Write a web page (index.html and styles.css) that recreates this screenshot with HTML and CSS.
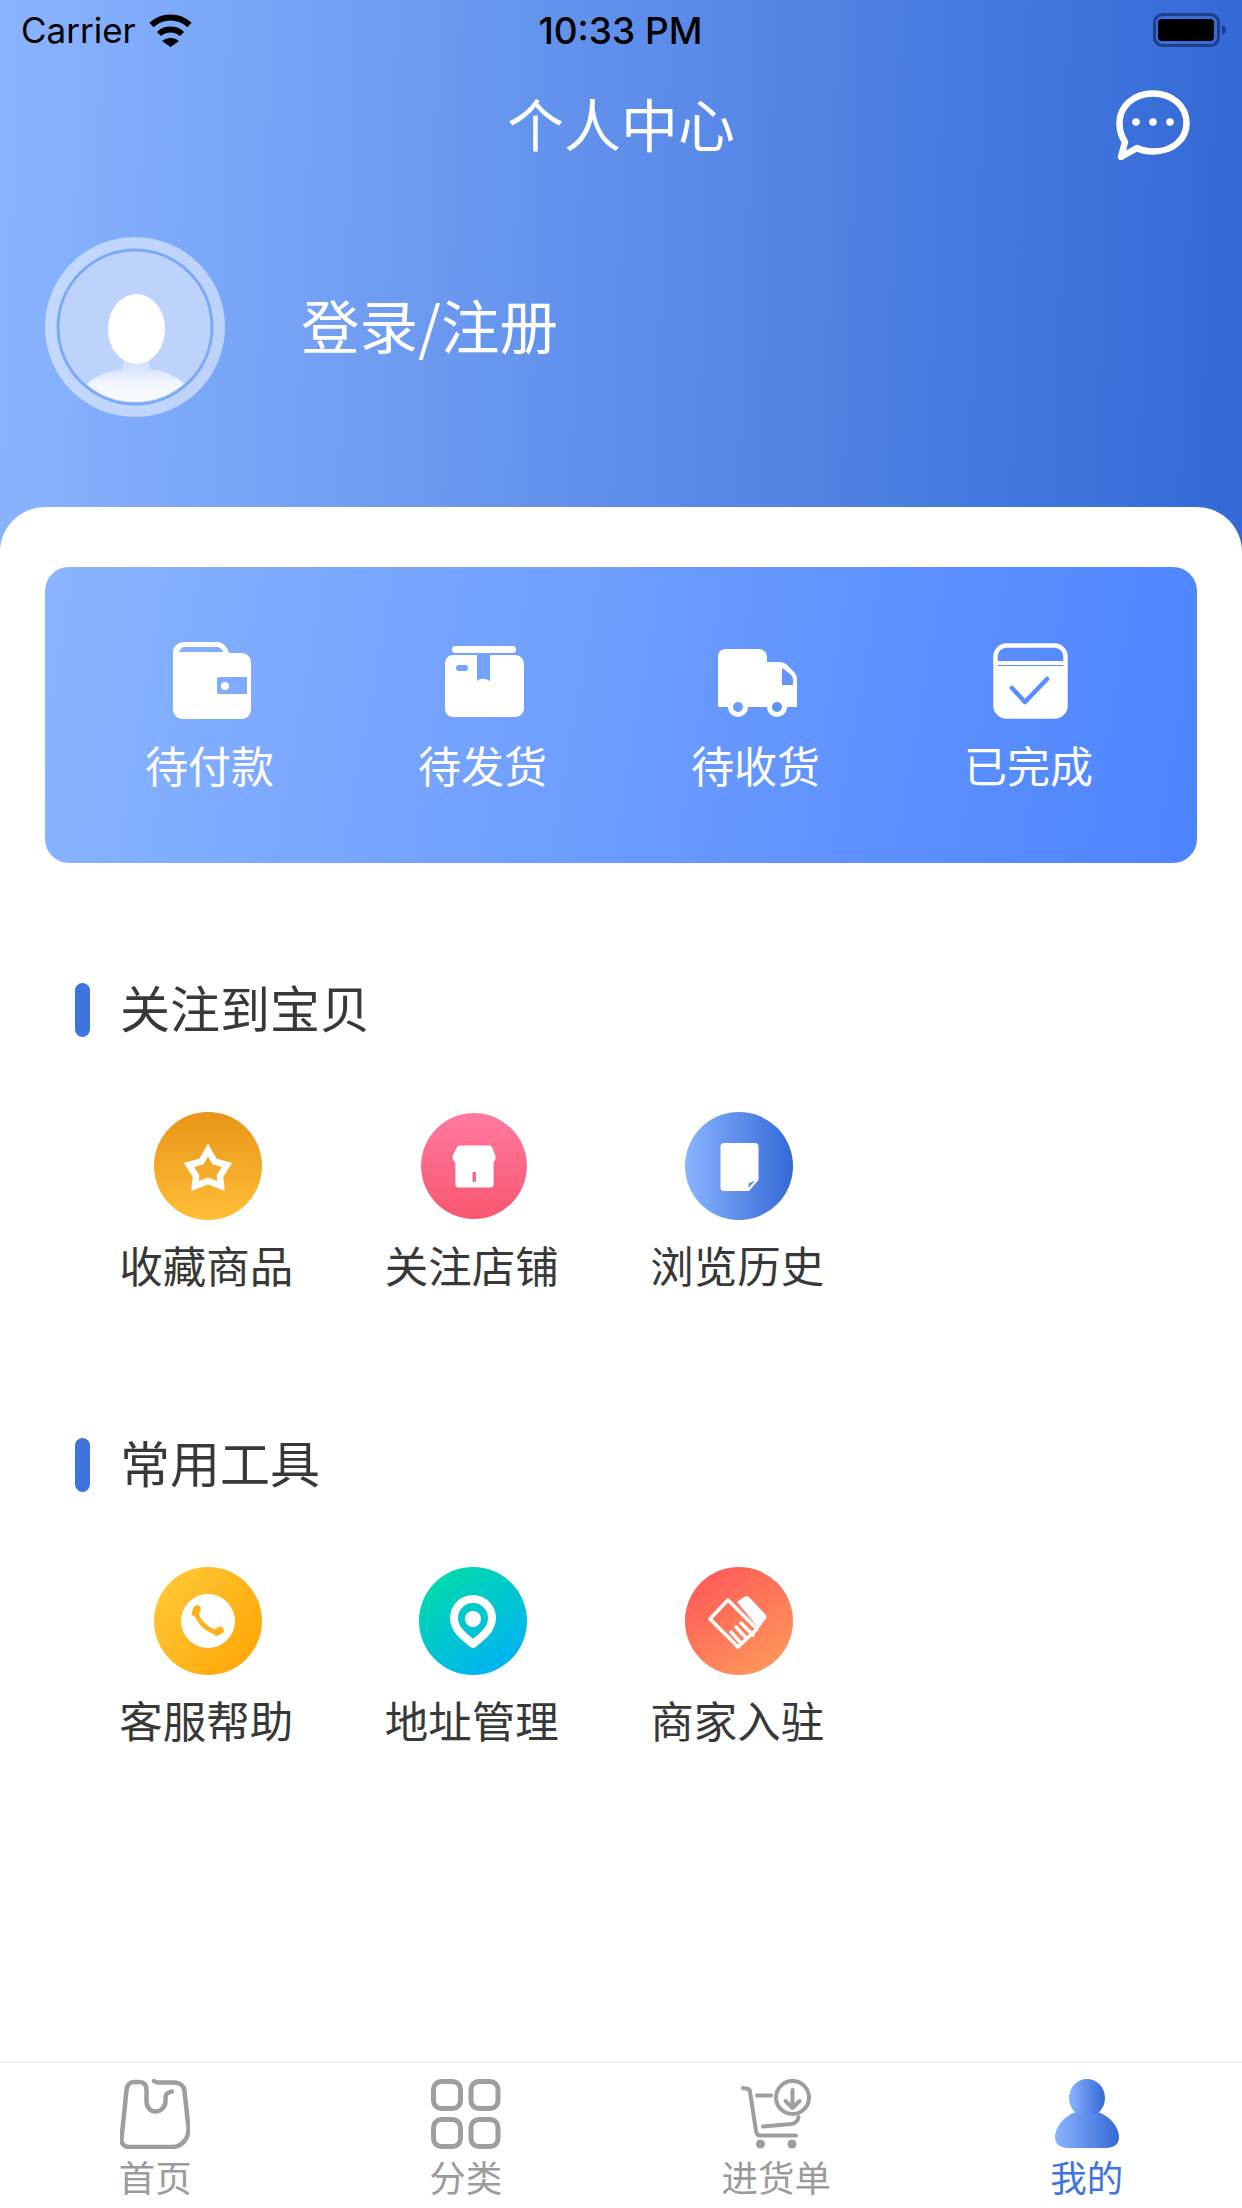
FILE: index.html
```html
<!DOCTYPE html>
<html lang="zh-CN">
<head>
  <meta charset="UTF-8">
  <title>个人中心</title>
  <link rel="stylesheet" href="styles.css">
</head>
<body>
  <div class="page">
    <header class="top">
      <div class="status-bar">
        <div class="status-left">
          <span class="carrier">Carrier</span>
          <svg class="wifi" viewBox="0 0 45 33"><path d="M3.5 11C14 1 31 1 41.5 11M11 20C17 14 28 14 34 20" fill="none" stroke="#000" stroke-width="6"/><path d="M14 27C19 23 26 23 31 27L22.5 33Z"/></svg>
        </div>
        <span class="time">10:33 PM</span>
        <svg class="battery" viewBox="0 0 73 34"><rect x="1.5" y="1.5" width="64" height="31" rx="8" fill="none" stroke="#1f3f8c" stroke-width="3"/><rect x="5" y="6" width="56" height="22" rx="4"/><path d="M69 12c3 1 4 3 4 5s-1 4-4 5Z" fill="#1f3f8c"/></svg>
      </div>
      <div class="nav-bar">
        <span></span>
        <h1>个人中心</h1>
        <svg class="chat" viewBox="0 0 74 70"><path d="M9 52C5 46 3.500 39 3.500 33C3.500 16 18 3.500 37 3.500S70.500 16 70.500 33S56 61.500 37 61.500C31 61.500 26 60.500 21 58L5 67Z" fill="none" stroke="#fff" stroke-width="6.500" stroke-linejoin="round"/><circle cx="20" cy="32" r="3.800" fill="#fff"/><circle cx="37" cy="32" r="3.800" fill="#fff"/><circle cx="54" cy="32" r="3.800" fill="#fff"/></svg>
      </div>
      <div class="user-row">
        <svg class="avatar" viewBox="0 0 180 180">
          <defs>
            <clipPath id="avatar-clip"><circle cx="90" cy="90" r="75"/></clipPath>
            <linearGradient id="avatar-body" x1="0" y1="0" x2="0" y2="1"><stop offset="0" stop-color="#fff" stop-opacity=".15"/><stop offset=".45" stop-color="#fff" stop-opacity=".8"/><stop offset="1" stop-color="#fff"/></linearGradient>
          </defs>
          <circle cx="90" cy="90" r="90" fill="#fff" fill-opacity=".5"/>
          <circle cx="90" cy="90" r="77" fill="#bdd3fb" stroke="#7aa9f8" stroke-width="3"/>
          <g clip-path="url(#avatar-clip)">
            <path d="M78 120H104V132C125 135 145 142 150 170V180H30V170C35 142 60 135 78 132Z" fill="url(#avatar-body)"/>
            <ellipse cx="91.500" cy="92" rx="28.500" ry="35" fill="#fff"/>
          </g>
        </svg>
        <span class="login">登录/注册</span>
      </div>
    </header>

    <main class="sheet">
      <div class="order-card">
        <div class="order-item">
          <svg viewBox="0 0 80 80"><path fill-rule="evenodd" fill="#fff" d="M2 13C2 6 7 2 14 2H45C52 2 56 6 58 13H70C76 13 80 17 80 23V69C80 75 76 79 70 79H12C6 79 2 75 2 69ZM8 12C9 9 11 7 14 7H45C49 7 51 9 52 12ZM46 39V52C46 53 47 54 48 54H76V37H48C47 37 46 38 46 39Z"/><circle cx="54" cy="46" r="4" fill="#fff"/></svg>
          <span>待付款</span>
        </div>
        <div class="order-item">
          <svg viewBox="0 0 80 80"><rect x="8" y="6" width="64" height="7" rx="3.500" fill="#fff"/><path fill-rule="evenodd" fill="#fff" d="M9 15H33V41C37 38 40 38 46 41V15H71C76 15 80 19 80 24V68C80 73 76 77 71 77H9C4 77 1 73 1 68V24C1 19 4 15 9 15ZM15 25C13 25 12 26 12 28S13 31 15 31H21C23 31 24 30 24 28S23 25 21 25Z"/></svg>
          <span>待发货</span>
        </div>
        <div class="order-item">
          <svg viewBox="0 0 80 80"><path fill-rule="evenodd" fill="#fff" d="M1 17C1 12 4 9 9 9H41C46 9 50 12 50 17V22H62C66 22 68 23 71 26L76 31C79 34 80 36 80 40V67H1ZM65 28V45H76V39C76 37 75 36 73 34L68 30Z"/><circle cx="21" cy="67" r="10" fill="#fff"/><circle cx="60" cy="67" r="10" fill="#fff"/><circle cx="21" cy="67" r="5" fill="#6a9eff"/><circle cx="60" cy="67" r="5" fill="#5e92ff"/></svg>
          <span>待收货</span>
        </div>
        <div class="order-item">
          <svg viewBox="0 0 80 80"><rect x="5.500" y="5.500" width="70" height="71" rx="11" fill="none" stroke="#fff" stroke-width="4.500"/><path d="M5 21H76V25H5Z" fill="#fff"/><path d="M7 26H74V65C74 71 70 75 65 75H16C11 75 7 71 7 65Z" fill="#fff"/><path d="M22 48L35 62L57 39" fill="none" stroke="#5a8dff" stroke-width="4.500" stroke-linecap="round" stroke-linejoin="round"/></svg>
          <span>已完成</span>
        </div>
      </div>

      <section class="group group-first">
        <div class="group-title"><i></i><h2>关注到宝贝</h2></div>
        <div class="tool-grid">
          <div class="tool">
            <div class="tool-icon bg-star"><svg viewBox="0 0 108 108"><path d="M54 38L60.500 49.500L73 53L66 64L67 74L54 69L41 74L42 64L35 53L47.500 49.500Z" fill="none" stroke="#fff" stroke-width="6.500"/></svg></div>
            <span>收藏商品</span>
          </div>
          <div class="tool">
            <div class="tool-icon bg-shop"><svg viewBox="0 0 108 108"><path fill-rule="evenodd" fill="#fff" d="M40 33H70C71 33 72 34 72.500 35L76 44C76.500 46 75.500 49 74 50V73C74 75 73 76 71 76H38C36 76 35 75 35 73V50C33 49 31.500 46 32 44L36.500 35C37 34 38 33 40 33ZM52.500 60V70H56V60Z"/></svg></div>
            <span>关注店铺</span>
          </div>
          <div class="tool">
            <div class="tool-icon bg-doc"><svg viewBox="0 0 108 108"><path fill-rule="evenodd" fill="#fff" d="M39 31H70C72 31 73.500 32.500 73.500 34.500V68L64 79H39C37 79 35.500 77.500 35.500 75.500V34.500C35.500 32.500 37 31 39 31ZM64 71L63 76L70 69Z"/></svg></div>
            <span>浏览历史</span>
          </div>
        </div>
      </section>

      <section class="group">
        <div class="group-title"><i></i><h2>常用工具</h2></div>
        <div class="tool-grid">
          <div class="tool">
            <div class="tool-icon bg-phone"><svg viewBox="0 0 108 108"><circle cx="54" cy="54" r="27" fill="#fff"/><path d="M42 44C43 53 52 63 62 65" fill="none" stroke="#ffb01f" stroke-width="4.500"/><path d="M43 42L41.500 46M63 65L66 63.500" stroke="#ffb01f" stroke-width="7.500" stroke-linecap="round"/></svg></div>
            <span>客服帮助</span>
          </div>
          <div class="tool">
            <div class="tool-icon bg-pin"><svg viewBox="0 0 108 108"><path d="M54 77C44 69 35 62 35 51A19 19 0 0 1 73 51C73 62 64 69 54 77Z" fill="none" stroke="#fff" stroke-width="8" stroke-linejoin="round"/><circle cx="54" cy="52" r="8" fill="#fff"/></svg></div>
            <span>地址管理</span>
          </div>
          <div class="tool">
            <div class="tool-icon bg-hand"><svg viewBox="0 0 108 108"><path d="M25 52L43 33L72 62L53 80Z" fill="none" stroke="#fff" stroke-width="3.500" stroke-linejoin="round"/><path d="M52 35L59 30C61 29 63 29 64 30L80 47C82 49 82 51 80 53L73 62L71 58Z" fill="#fff"/><path d="M46 65L55 75M51 60L61 71M56 56L68 68" stroke="#fff" stroke-width="3.500" stroke-linecap="round"/></svg></div>
            <span>商家入驻</span>
          </div>
        </div>
      </section>
    </main>

    <nav class="tab-bar">
      <div class="tab">
        <svg viewBox="0 0 70 70"><path d="M34 2C35 3 36 3.500 38 3.500H54C60 3.500 64 7 64.500 12L68.500 49C69 59 62 68 52 68H9C4 68 1 64 1.500 60L6.500 11C7 6 10 3 14 3H19C24 3 26.500 6 26.500 11V22C26.500 28 30 32.500 35.500 32.500S45.500 28 45.500 22V18C45.500 15 47.500 13.500 52 12.500" fill="none" stroke="#9e9e9e" stroke-width="4.500" stroke-linecap="round"/></svg>
        <span>首页</span>
      </div>
      <div class="tab">
        <svg viewBox="0 0 70 70"><g fill="none" stroke="#9e9e9e" stroke-width="5"><rect x="2.500" y="2.500" width="27" height="27" rx="8"/><rect x="40" y="2.500" width="27" height="27" rx="8"/><rect x="2.500" y="40.500" width="27" height="27" rx="8"/><rect x="40" y="40.500" width="27" height="27" rx="8"/></g></svg>
        <span>分类</span>
      </div>
      <div class="tab">
        <svg viewBox="0 0 70 70"><g fill="none" stroke="#9e9e9e" stroke-width="4" stroke-linecap="round" stroke-linejoin="round"><circle cx="51.500" cy="18.500" r="16.500"/><path d="M51.500 11V28M44.500 22L51.500 29L58.500 22"/><path d="M2 9L7 10C8.500 10.500 9 11 9 13L15 52C15.500 55 16.500 56.500 19 56.500H55"/><path d="M16 16.500H30M22 47.500L50 45C54 44.500 57 42 57.500 38"/></g><circle cx="19.500" cy="65" r="4.500" fill="#9e9e9e"/><circle cx="51" cy="65" r="4.500" fill="#9e9e9e"/></svg>
        <span>进货单</span>
      </div>
      <div class="tab tab-active">
        <svg viewBox="0 0 70 70"><defs><linearGradient id="me-grad"><stop offset="0" stop-color="#8ab4ff"/><stop offset="1" stop-color="#3369d6"/></linearGradient></defs><ellipse cx="35" cy="19" rx="18" ry="19" fill="url(#me-grad)"/><path d="M24 33C12 37 3 48 3 58C3 65 7 68 15 69H55C63 68 67 65 67 58C67 48 58 37 46 33C39 38 31 38 24 33Z" fill="url(#me-grad)"/></svg>
        <span>我的</span>
      </div>
    </nav>
  </div>
</body>
</html>
```

FILE: styles.css
```css
* { box-sizing: border-box; }
body { margin: 0; font-family: "Noto Sans CJK SC", "Noto Sans", sans-serif; background: #fff; }
.page { width: 1242px; height: 2208px; display: flex; flex-direction: column; overflow: hidden; }

.top { height: 567px; flex: none; color: #fff; background: linear-gradient(92deg, #8ab4ff, #3369d6); }
.status-bar { height: 60px; display: grid; grid-template-columns: 1fr auto 1fr; align-items: center; color: #000; padding: 0 16px 0 21px; }
.status-left { display: flex; align-items: center; gap: 12px; }
.carrier { font: 400 35px Inter, sans-serif; }
.wifi { width: 45px; height: 33px; }
.time { font: 500 37px Inter, sans-serif; margin-left: -6px; }
.battery { width: 73px; height: 34px; justify-self: end; }

.nav-bar { height: 130px; padding: 0 52px; display: grid; grid-template-columns: 1fr auto 1fr; align-items: center; }
.nav-bar h1 { margin: 0 0 6px; font-size: 57px; font-weight: 400; line-height: 1; }
.chat { width: 74px; height: 70px; justify-self: end; }

.user-row { margin-top: 47px; padding-left: 45px; display: flex; align-items: center; gap: 76px; }
.avatar { width: 180px; height: 180px; }
.login { font-size: 58.500px; padding-bottom: 8px; }

.sheet { flex: 1; margin-top: -60px; padding: 60px 45px 0; background: #fff; border-radius: 45px 45px 0 0; position: relative; }

.order-card { height: 296px; padding: 73px 32px 0 28px; border-radius: 24px; display: grid; grid-template-columns: repeat(4, 1fr); background: linear-gradient(100deg, #8ab4ff, #4d84ff); color: #fff; }
.order-item { display: flex; flex-direction: column; align-items: center; }
.order-item svg { width: 80px; height: 80px; margin-left: 3px; }
.order-item span { font-size: 43px; line-height: 60px; margin-top: 14px; }

.group { margin-top: 143px; padding-left: 30px; }
.group-first { margin-top: 120px; }
.group-title { display: flex; align-items: center; gap: 30px; height: 54px; }
.group-title i { width: 15px; height: 54px; border-radius: 8px; background: #3f74dc; }
.group-title h2 { margin: 0 0 8px; font-size: 50px; font-weight: 400; color: #383838; line-height: 1; }

.tool-grid { display: grid; grid-template-columns: repeat(3, 265.500px); margin-top: 75px; }
.tool { display: flex; flex-direction: column; align-items: center; }
.tool span { font-size: 43.500px; line-height: 60px; color: #383838; margin: 15px 3px 0 0; }
.tool-icon { width: 108px; height: 108px; border-radius: 50%; }
.tool-icon svg { display: block; width: 108px; height: 108px; }
.bg-star { background: linear-gradient(180deg, #e89518, #ffbe36); }
.bg-shop { background: linear-gradient(180deg, #ff7aa0, #f8566f); margin-left: 1px; transform: scale(.98); }
.bg-doc { background: linear-gradient(90deg, #8ab4ff, #3369d6); }
.bg-phone { background: linear-gradient(125deg, #ffcb3c, #ffa300); }
.bg-pin { background: linear-gradient(145deg, #00e0a0, #00acff); }
.bg-hand { background: linear-gradient(145deg, #ff5357, #ff9e5c); }

.tab-bar { height: 147px; flex: none; border-top: 2px solid #eee; display: grid; grid-template-columns: repeat(4, 1fr); background: #fff; }
.tab { display: flex; flex-direction: column; align-items: center; padding-top: 16px; color: #9b9b9b; }
.tab svg { width: 70px; height: 70px; }
.tab span { font-size: 36.500px; line-height: 44px; margin-top: 6px; }
.tab-active { color: #3f74dc; }
```
